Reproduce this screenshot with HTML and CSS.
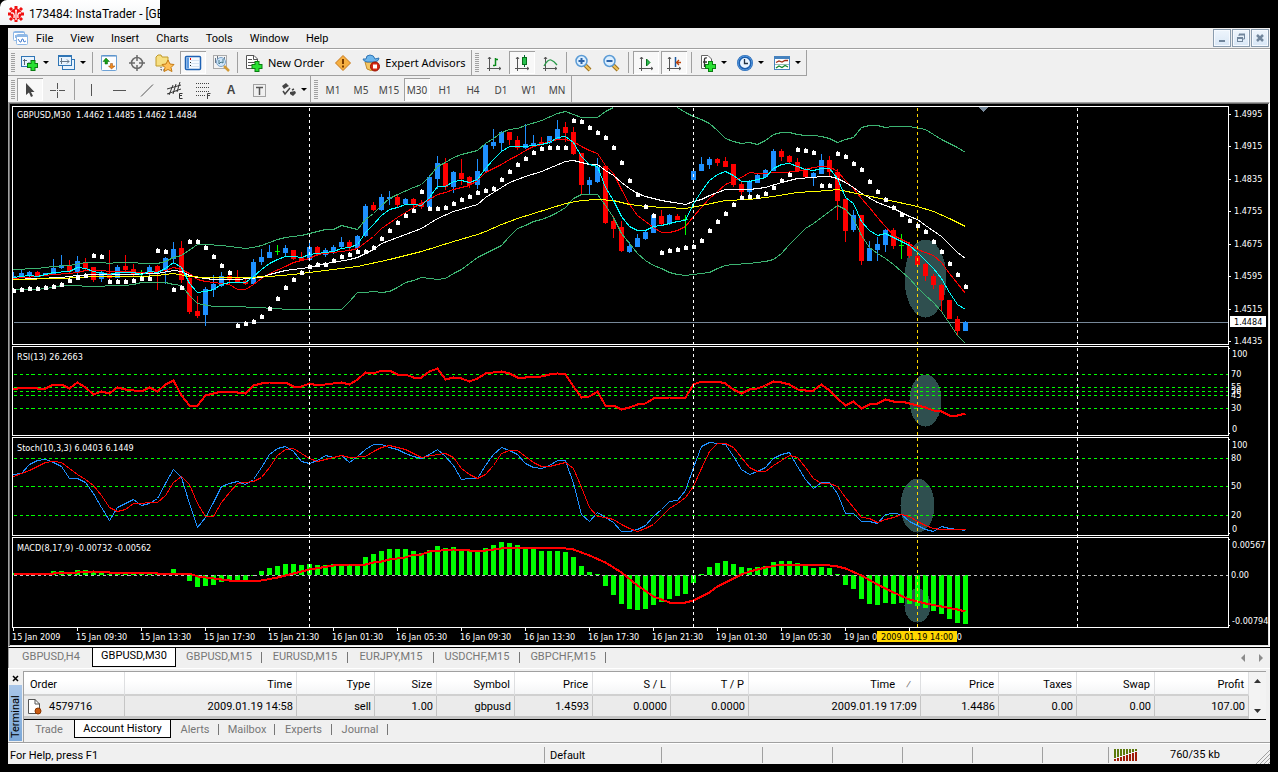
FILE: index.html
```html
<!DOCTYPE html>
<html lang="en">
<head>
<meta charset="utf-8">
<title>InstaTrader</title>
<link rel="stylesheet" href="styles.css">
</head>
<body>
<header class="titlebar">
  <svg class="logo" width="16" height="16" viewBox="0 0 16 16"><g stroke="#f01010" stroke-width="3"><path d="M8 0V3M8 13V16M0 8H3M13 8H16M2 2L4 4M14 2L12 4M2 14L4 12M14 14L12 12"/></g><circle cx="8" cy="8" r="5.6" fill="#f01010"/><g fill="none" stroke="#fff" stroke-width="1.3"><path d="M8 5V14M3 7Q7 6 6 12M13 7Q9 6 10 12"/></g><circle cx="8" cy="4.500" r="1" fill="#fff"/></svg>
  <span>173484: InstaTrader - [GBPUSD,M30]</span>
</header>
<main class="app">
  <div class="menubar">
    <svg width="16" height="16" viewBox="0 0 16 16"><g fill="#fff" stroke="#8fb8e6"><rect x=".5" y="1.500" width="11" height="9" rx="1"/><path d="M.5 2.500H11.500"/><path d="M2.500 5V8L4.500 6" fill="none"/><rect x="3.500" y="4.500" width="11" height="10" rx="1"/><path d="M3.500 6H14.500" stroke-width="2"/><path d="M5 9L7 12L8 12L9 9L10 9L11 12L13 11" fill="none" stroke="#4a80d0"/></g></svg>
    <nav class="menu">
      <button>File</button><button>View</button><button>Insert</button><button>Charts</button><button>Tools</button><button>Window</button><button>Help</button>
    </nav>
    <div class="winbtns">
      <button aria-label="Minimize"><svg width="10" height="10"><path d="M2 8H8" stroke="#71869c" stroke-width="2"/></svg></button>
      <button aria-label="Restore"><svg width="10" height="10" fill="none" stroke="#71869c"><path d="M3 3V1.500H8.500V6H7" /><path d="M3 1.500H9" stroke-width="2"/><rect x="1.500" y="5" width="5" height="3.500"/><path d="M1 5H7" stroke-width="2"/></svg></button>
      <button aria-label="Close"><svg width="10" height="10"><path d="M2 2L8 8M8 2L2 8" stroke="#71869c" stroke-width="2.500"/></svg></button>
    </div>
  </div>

  <div class="toolrow">
    <div class="toolbar lined">
      <i class="grip"></i>
      <button class="tool drop" aria-label="New chart"><svg width="18" height="18"><rect x=".5" y="2.500" width="13" height="10" fill="#e8f3fd" stroke="#2f75b5"/><path d="M0 2.500H14" stroke="#2f75b5"/><path d="M3.500 5V11M2 6.500H6M8 8V10" stroke="#567"/><path d="M12 6V17M6 11.500H17" stroke="#0a7d12" stroke-width="5"/><path d="M12 7V16M7 11.500H16" stroke="#29e033" stroke-width="3"/></svg></button>
      <button class="tool drop" aria-label="Profiles"><svg width="18" height="18"><g fill="#e8f3fd" stroke="#2f75b5"><rect x="4.500" y="5.500" width="12" height="10"/><rect x=".5" y="1.500" width="13" height="10"/></g><path d="M0 2H14" stroke="#2f75b5" stroke-width="2"/><path d="M3.500 4V10M2 7.500H11M9 5.500L11 7.500L9 9.500" fill="none" stroke="#678"/></svg></button>
      <i class="sep"></i>
      <button class="tool" aria-label="Market watch"><svg width="18" height="18"><rect x="1.500" y="1.500" width="15" height="15" rx="1" fill="#fdfdff" stroke="#6ea2d6"/><path d="M1 2H17" stroke="#4d88c4"/><path d="M6 4L9.500 7.500H7.500V10H5V7.500H3Z" fill="#16a016" stroke="#096009" stroke-width=".5"/><path d="M11.500 15L8.500 12H10.500V9.500H12.500V12H15Z" fill="#ef8b22" stroke="#9b4a06" stroke-width=".5"/></svg></button>
      <button class="tool" aria-label="Data window"><svg width="18" height="18" fill="none" stroke="#6a6a6a" stroke-width="1.500"><circle cx="9" cy="9" r="5.500"/><path d="M9 1V7M9 11V17M1 9H7M11 9H17"/></svg></button>
      <button class="tool" aria-label="Navigator"><svg width="20" height="18"><path d="M1 12V3L3 1H6L7 3H13V12Z" fill="#f7df82" stroke="#c09a2a"/><path d="M6 13V17M6 16H9" stroke="#555" stroke-dasharray="1 1"/><path d="M13 6L15 10L19 10.500L16 13.500L17 17.500L13 15.500L9 17.500L10 13.500L7 10.500L11 10Z" fill="#ffc058" stroke="#c47a12"/></svg></button>
      <button class="tool on" aria-label="Terminal"><svg width="18" height="18"><rect x="1.500" y="2.500" width="15" height="13" rx="1" fill="#f5faff" stroke="#1e62b4" stroke-width="1.500"/><path d="M2.500 3.500H5V14.500H2.500Z" fill="#5e9be0"/><path d="M7 6.500H15M7 9.500H15M7 12.500H15" stroke="#d5e3f2"/><path d="M6.500 5V13" stroke="#222" stroke-dasharray="1 2"/><path d="M6.500 4V6" stroke="#e00"/></svg></button>
      <button class="tool" aria-label="Strategy tester"><svg width="18" height="18"><rect x="1.500" y="1.500" width="13" height="13" fill="#f4f4f4" stroke="#aaa"/><path d="M3.500 4V9M5.500 2V5M12.500 3V6" stroke="#678"/><circle cx="9" cy="8" r="4.500" fill="#cfe6fa" stroke="#7ea4c8"/><path d="M7 6V10L9 8L11 9V5" fill="none" stroke="#478"/><path d="M12 12L17 17" stroke="#d29a35" stroke-width="2.500"/></svg></button>
      <i class="sep"></i>
      <button class="tool text"><svg width="18" height="18"><path d="M1.500 1.500H9L12.500 5V14.500H1.500Z" fill="#fff" stroke="#555"/><path d="M8.500 1V5.500H13M3 5.500H7M3 8.500H10M3 11.500H8" fill="none" stroke="#555"/><path d="M12 7V18M6.500 12.500H17.500" stroke="#0a7d12" stroke-width="5"/><path d="M12 8V17M7.500 12.500H16.500" stroke="#29e033" stroke-width="3"/></svg>New Order</button>
      <button class="tool" aria-label="Alert"><svg width="18" height="18"><path d="M9 1.500L16.500 9L9 16.500L1.500 9Z" fill="#f6b042" stroke="#c8781a"/><path d="M9 5V10M9 11.500V13.500" stroke="#7a3c00" stroke-width="2"/></svg></button>
      <button class="tool text"><svg width="18" height="18"><path d="M3 8L5 15Q9 18 13 15L14 8Z" fill="#f4c765" stroke="#c28b2c"/><path d="M1 5Q1 7 5 8H13Q17 7 17 4L13 5Q12 1 8 1T4 5Z" fill="#6cb6ec" stroke="#3075b5"/><circle cx="13" cy="12.500" r="4.500" fill="#d42a14" stroke="#971000"/><rect x="11" y="10.500" width="4" height="4" fill="#fff"/></svg>Expert Advisors</button>
    </div>
    <div class="toolbar lined">
      <i class="grip"></i>
      <button class="tool" aria-label="Bar chart"><svg width="18" height="18" fill="none" stroke="#555"><path d="M4.500 3V17M2 14.500H16M3 5L4.500 3L6 5M14 13L16 14.500L14 16"/><path d="M10.500 4V12M8 11.500H10M11 5.500H13" stroke="#0a8a1a" stroke-width="1.500"/></svg></button>
      <button class="tool on" aria-label="Candlesticks"><svg width="18" height="18" fill="none" stroke="#555"><path d="M4.500 3V17M2 14.500H16M3 5L4.500 3L6 5M14 13L16 14.500L14 16"/><path d="M11.500 1V13" stroke="#063"/><rect x="9.500" y="3.500" width="4" height="7" fill="#28c04e" stroke="#08701c"/></svg></button>
      <button class="tool" aria-label="Line chart"><svg width="18" height="18" fill="none" stroke="#555"><path d="M4.500 3V17M2 14.500H16M3 5L4.500 3L6 5M14 13L16 14.500L14 16"/><path d="M3 12Q7 5 10 6T16 11" stroke="#2a9a4a" stroke-width="1.300"/></svg></button>
      <i class="sep"></i>
      <button class="tool" aria-label="Zoom in"><svg width="18" height="18"><path d="M11 11L16 16" stroke="#9b6f1e" stroke-width="4"/><path d="M11 11L16 16" stroke="#f0c35a" stroke-width="2"/><circle cx="7.500" cy="7" r="5.500" fill="#dcefff" stroke="#5b9bd5" stroke-width="1.500"/><path d="M7.500 4V10M4.500 7H10.500" stroke="#2b63a8" stroke-width="2"/></svg></button>
      <button class="tool" aria-label="Zoom out"><svg width="18" height="18"><path d="M11 11L16 16" stroke="#9b6f1e" stroke-width="4"/><path d="M11 11L16 16" stroke="#f0c35a" stroke-width="2"/><circle cx="7.500" cy="7" r="5.500" fill="#dcefff" stroke="#5b9bd5" stroke-width="1.500"/><path d="M4.500 7H10.500" stroke="#2b63a8" stroke-width="2"/></svg></button>
      <i class="sep wide"></i>
      <button class="tool on" aria-label="Auto scroll"><svg width="18" height="18" fill="none" stroke="#555"><path d="M4.500 3V17M2 14.500H16M3 5L4.500 3L6 5M14 13L16 14.500L14 16"/><path d="M9.500 5L13 8.500L9.500 12Z" fill="#28c04e" stroke="#08701c"/></svg></button>
      <button class="tool on" aria-label="Chart shift"><svg width="18" height="18" fill="none" stroke="#555"><path d="M4.500 3V17M2 14.500H16M3 5L4.500 3L6 5M14 13L16 14.500L14 16"/><path d="M10.500 3V13" stroke="#1c5aa0" stroke-width="1.500"/><path d="M11 8.500H16M14 6L11.500 8.500L14 11" stroke="#b8420a" stroke-width="1.300"/></svg></button>
      <i class="sep wide"></i>
      <button class="tool drop" aria-label="Indicators"><svg width="18" height="18"><path d="M2.500 1.500H9L12.500 5V14.500H2.500Z" fill="#fff" stroke="#666"/><path d="M8 4Q5 3 5.500 7V13M4 8H8" fill="none" stroke="#333" stroke-width="1.300"/><path d="M11.500 7V18M6 12.500H17" stroke="#0a7d12" stroke-width="5"/><path d="M11.500 8V17M7 12.500H16" stroke="#29e033" stroke-width="3"/></svg></button>
      <button class="tool drop" aria-label="Periods"><svg width="18" height="18"><circle cx="9" cy="9" r="6.500" fill="#e8f4ff" stroke="#1d5fae" stroke-width="3"/><circle cx="9" cy="9" r="7" fill="none" stroke="#5ba0e6"/><path d="M8.500 5V9.500H12" fill="none" stroke="#234" stroke-width="1.300"/></svg></button>
      <button class="tool drop" aria-label="Templates"><svg width="18" height="18"><rect x="1.500" y="2.500" width="15" height="13" fill="#fff" stroke="#4682be"/><path d="M1 3.500H17" stroke="#4682be" stroke-width="3"/><path d="M3 8.500L6 7L9 8L12 6.500L15 6.500" fill="none" stroke="#a02a10" stroke-width="1.300"/><path d="M2 10.500H16" stroke="#9bb"/><path d="M3 14L6 12L9 13.500L12 11.500L15 13" fill="none" stroke="#12882a" stroke-width="1.300"/></svg></button>
    </div>
  </div>

  <div class="toolrow second">
    <div class="toolbar">
      <i class="grip"></i>
      <button class="tool on" aria-label="Cursor"><svg width="18" height="18"><path d="M5 2V14L8 11.500L10 16L12 15L10 11H13.500Z" fill="#444"/></svg></button>
      <button class="tool" aria-label="Crosshair"><svg width="18" height="18" stroke="#555"><path d="M8.500 2V8M8.500 11V17M1 9.500H7M10 9.500H16M8 9.500H9"/></svg></button>
      <i class="sep"></i>
      <button class="tool" aria-label="Vertical line"><svg width="18" height="18" stroke="#555"><path d="M9.500 3V15"/></svg></button>
      <button class="tool" aria-label="Horizontal line"><svg width="18" height="18" stroke="#555"><path d="M3 9.500H16"/></svg></button>
      <button class="tool" aria-label="Trendline"><svg width="18" height="18" stroke="#555"><path d="M3 15.500L15 3.500"/></svg></button>
      <button class="tool" aria-label="Equidistant channel"><svg width="18" height="18" fill="none" stroke="#333"><path d="M1 8L15 4M1 13L15 8M3 14L7 4M7 13L10 3M11 11L14 1"/><path d="M16.500 12.500H13.500V17.500H16.500M13.500 14.500H16"/></svg></button>
      <button class="tool" aria-label="Fibonacci"><svg width="18" height="18" fill="none" stroke="#444"><path d="M2 2.500H15M2 6.500H15M2 10.500H15M2 14.500H11" stroke-dasharray="1 1"/><path d="M16.500 12.500H13.500V18M13.500 14.500H16"/></svg></button>
      <button class="tool glyph">A</button>
      <button class="tool" aria-label="Text label"><svg width="18" height="18" fill="none" stroke="#555"><rect x="3.500" y="3.500" width="12" height="12" stroke-dasharray="1 1"/><path d="M6 6.500H13M9.500 6V14" stroke-width="1.500"/></svg></button>
      <button class="tool drop late" aria-label="Arrows"><svg width="16" height="18"><path d="M1 5L5 2L8 5L6 6L3 8Z M9 11L14 10L15 12L12 15L9 13Z" fill="#444"/><path d="M2 10L4 13L9 7M11 9L13 8" fill="none" stroke="#444" stroke-width="1.500"/></svg></button>
    </div>
    <div class="toolbar">
      <i class="grip"></i>
      <button class="tool tf">M1</button><button class="tool tf">M5</button><button class="tool tf">M15</button><button class="tool tf on">M30</button><button class="tool tf">H1</button><button class="tool tf">H4</button><button class="tool tf">D1</button><button class="tool tf">W1</button><button class="tool tf">MN</button>
    </div>
  </div>

  <section class="chart"><svg id="chart" width="100%" height="541"></svg></section>

  <nav class="charttabs">
    <button>GBPUSD,H4</button><button class="active">GBPUSD,M30</button><button>GBPUSD,M15</button><button>EURUSD,M15</button><button>EURJPY,M15</button><button>USDCHF,M15</button><button>GBPCHF,M15</button>
    <span class="scroll"><svg width="22" height="8" fill="#8c8c8c"><path d="M4 0V8L0 4Z M18 0V8L22 4Z"/></svg></span>
  </nav>

  <section class="terminal">
    <div class="side">
      <button aria-label="Close terminal"><svg width="7" height="7"><path d="M1 1L6 6M6 1L1 6" stroke="#000" stroke-width="1.500"/></svg></button>
      <span class="caption">Terminal</span>
    </div>
    <div class="body">
      <div class="tablewrap">
        <table>
          <colgroup><col class="w101"><col class="w172"><col class="w78"><col class="w62"><col class="w78"><col class="w78"><col class="w78"><col class="w78"><col class="w172"><col class="w78"><col class="w78"><col class="w78"><col class="w94"></colgroup>
          <thead><tr><th>Order</th><th>Time</th><th>Type</th><th>Size</th><th>Symbol</th><th>Price</th><th>S / L</th><th>T / P</th><th class="sorted">Time<span>⁄</span></th><th>Price</th><th>Taxes</th><th>Swap</th><th>Profit</th></tr></thead>
          <tbody><tr><td><svg width="16" height="16"><path d="M1.500 .5H8L12.500 5V14.500H1.500Z" fill="#fff" stroke="#555"/><path d="M8 0V5H13" fill="none" stroke="#555"/><circle cx="11" cy="12" r="3" fill="#c85a10" stroke="#8a3600"/></svg>4579716</td><td>2009.01.19 14:58</td><td>sell</td><td>1.00</td><td>gbpusd</td><td>1.4593</td><td>0.0000</td><td>0.0000</td><td>2009.01.19 17:09</td><td>1.4486</td><td>0.00</td><td>0.00</td><td>107.00</td></tr></tbody>
        </table>
        <div class="vscroll"><svg width="7" height="4"><path d="M0 4L3.500 0L7 4Z" fill="#333"/></svg><svg width="7" height="4"><path d="M0 0L3.500 4L7 0Z" fill="#333"/></svg></div>
      </div>
      <nav class="termtabs">
        <button>Trade</button><button class="active">Account History</button><button>Alerts</button><button>Mailbox</button><button>Experts</button><button>Journal</button>
      </nav>
    </div>
  </section>

  <footer class="status">
    <span class="help">For Help, press F1</span>
    <span class="c117">Default</span><span class="c101"></span><span class="c70"></span><span class="c70"></span><span class="c70"></span><span class="c70"></span><span class="c66"></span>
    <span class="net"><svg id="net" width="24" height="12" shape-rendering="crispEdges"></svg><b>760/35 kb</b></span>
    <svg class="sizer" width="14" height="14" stroke="#a0a0a0"><path d="M0 14L14 0M4 14L14 4M8 14L14 8M12 14L14 12"/></svg>
  </footer>
</main>
<script src="chart.js"></script>
</body>
</html>
```

FILE: styles.css
```css
* { box-sizing: border-box; }
body { margin: 0; background: #000; font: 11px/14px Roboto, "Noto Sans", sans-serif; color: #000; }
button { border: 0; padding: 0; background: none; font: inherit; color: inherit; }
svg { display: block; flex: none; }

.titlebar { display: flex; align-items: center; gap: 5px; width: 160px; height: 25px; padding: 2px 0 0 8px; overflow: hidden; white-space: nowrap; font-size: 12px; background: linear-gradient(#fff, #f0f3f5); border-top-left-radius: 7px; }
.app { margin: 3px 8px 8px; background: #f0f0f0; }

.menubar { display: flex; align-items: center; height: 22px; padding: 0 1px 1px 5px; border-bottom: 1px solid #fff; box-shadow: inset 0 -1px #a0a0a0; }
.menu { display: flex; flex: 1; gap: 17px; padding: 1px 0 0 7px; }
.winbtns { display: flex; gap: 1px; }
.winbtns button { display: grid; place-items: center; width: 18px; height: 18px; border: 1px solid #8a9cae; background: linear-gradient(#eef5fc, #d9e7f6); box-shadow: inset 0 0 0 1px #f6faff; }

.toolrow { display: flex; height: 26px; }
.toolbar { display: flex; align-items: center; padding-left: 3px; border-right: 1px solid #a0a0a0; }
.toolbar.lined { border-bottom: 1px solid #a0a0a0; }
.second .toolbar { padding-top: 1px; }
.grip { width: 4px; height: 19px; margin-right: 1px; background: repeating-linear-gradient(#a0a0a0 0 1px, #f0f0f0 1px 2px); }
.tool { display: flex; align-items: center; justify-content: center; width: 26px; height: 23px; margin: 0 1px; }
.tool.on { background: #f8f8f8; box-shadow: inset 1px 1px #a0a0a0, inset -1px -1px #fff; }
.tool.drop { width: 35px; gap: 4px; }
.tool.drop::after { content: ""; border: 3px solid transparent; border-top-color: #000; border-bottom: 0; }
.tool.late { padding-left: 4px; }
.tool.text { width: auto; gap: 5px; padding: 0 4px; font: 11px/14px "Noto Sans", sans-serif; white-space: nowrap; }
.tool.glyph { color: #444; font: bold 12px/14px "Liberation Sans", sans-serif; }
.tool.tf { color: #444; font: 10px/14px "Noto Sans", sans-serif; }
.sep { width: 1px; height: 21px; margin: 0 2px; background: #a0a0a0; }
.sep.wide { margin: 0 3px; }

.chart { background: #000; border: 1px solid; border-color: #a0a0a0 #fff #fff #a0a0a0; box-shadow: inset 1px 1px #696969, inset -1px -1px #e3e3e3; padding: 1px; overflow: hidden; }
.chart svg { display: block; overflow: hidden; }
.chart text { font: 9px/12px "DejaVu Sans Condensed", "DejaVu Sans", sans-serif; fill: #fff; }
.chart text.dark { fill: #000; }

.charttabs, .termtabs { display: flex; align-items: center; color: #777; border-top: 1px solid #000; }
.charttabs { height: 21px; padding-left: 1px; border-left: 1px solid #a0a0a0; }
.charttabs button { position: relative; width: 86px; height: 19px; padding-bottom: 2px; align-self: flex-start; }
.charttabs button:first-child { width: 82px; }
.charttabs .active { width: 84px; background: #fff; color: #000; border: 1px solid #000; border-top: 0; }
.charttabs button:nth-child(n+3)::after, .termtabs button:nth-child(n+3)::after { content: ""; position: absolute; right: 0; top: 4px; height: 11px; border-right: 1px solid #777; }
.charttabs .scroll { margin-left: auto; padding-right: 7px; }

.terminal { display: flex; border-top: 1px solid #fff; padding-top: 2px; background: #f0f0f0; }
.side { display: flex; flex-direction: column; align-items: center; width: 15px; padding-top: 1px; }
.side button { height: 13px; }
.caption { display: flex; align-items: center; writing-mode: vertical-rl; transform: rotate(180deg); width: 13px; height: 56px; padding-top: 3px; font: 11px/13px Roboto, sans-serif; background: linear-gradient(#7ba8d8, #a9c6e8); }
.body { flex: 1; min-width: 0; border-left: 1px solid #a0a0a0; margin-right: 4px; }
.tablewrap { display: flex; border-top: 1px solid #a0a0a0; background: #f0f0f0; }
table { flex: 1; min-width: 0; width: 100%; table-layout: fixed; border-collapse: separate; border-spacing: 0; }
.w101 { width: 101px; } .w172 { width: 172px; } .w78 { width: 78px; } .w62 { width: 62px; } .w94 { width: 94px; }
th, td { text-align: right; font-weight: 400; white-space: nowrap; }
th { height: 24px; padding: 3px 4px 0; background: linear-gradient(#fff 40%, #f4f5f6); border-right: 1px solid #dedfe1; border-bottom: 2px solid #d0d0d0; }
td { height: 23px; padding: 1px 3px 0; background: #ebebeb; border-right: 1px solid #c5c5c5; border-bottom: 3px solid #c5c5c5; }
th:first-child { text-align: left; padding-left: 6px; }
td:first-child { display: flex; align-items: center; gap: 6px; padding-left: 3px; }
.sorted span { padding: 0 5px 0 11px; color: #777; }
.vscroll { display: flex; flex-direction: column; justify-content: space-between; align-items: center; width: 17px; padding: 7px 0 6px; background: #f3f3f3; }
.termtabs { height: 23px; padding-bottom: 3px; }
.termtabs button { position: relative; width: 61px; height: 19px; }
.termtabs button:first-child { width: 50px; }
.termtabs .active { width: 97px; height: 18px; align-self: flex-start; background: #fff; color: #000; border: 1px solid #000; border-top: 0; }
.termtabs button:nth-child(3) { width: 48px; }
.termtabs button:nth-child(4), .termtabs button:nth-child(6) { width: 56px; }
.termtabs button:nth-child(5) { width: 57px; }

.status { position: relative; display: flex; align-items: center; height: 22px; padding-top: 2px; border-top: 1px solid #a0a0a0; box-shadow: inset 0 1px #fff; }
.status > span { height: 16px; line-height: 18px; border-left: 1px solid #a0a0a0; padding-left: 5px; }
.status .help { flex: 1; border: 0; padding-left: 2px; }
.c117 { width: 117px; } .c101 { width: 101px; } .c70 { width: 70px; } .c66 { width: 66px; }
.status .net { display: flex; align-items: center; gap: 32px; width: 162px; }
.net b { font-weight: 400; }
.sizer { position: absolute; right: 0; bottom: 0; }
```

FILE: chart.js
```js
// Bars are 8px apart; all y values below are window pixels.
const NS = "http://www.w3.org/2000/svg";
const el = (parent, name, attrs, text) => {
  const n = document.createElementNS(NS, name);
  for (const k in attrs) n.setAttribute(k, attrs[k]);
  if (text) n.textContent = text;
  parent.appendChild(n);
  return n;
};
const X = i => 13 + 8 * i;
const root = document.getElementById("chart");
const plot = el(root, "g", { transform: "translate(-10 -104)", "shape-rendering": "crispEdges" });
const lines = el(plot, "g", { transform: "translate(.5 .5)", fill: "none" });
const WHITE = "#fff", RED = "#f00", BLUE = "#1e90ff", LIME = "#0f0";

const hline = (y, color, dash) => el(lines, "line", { x1: 13, x2: "100%", y1: y, y2: y, stroke: color, "stroke-dasharray": dash || "none" });

// highlighted zones
[[925, 278, 21, 39], [925, 400, 16, 26], [917, 505, 17, 27], [917, 605, 13, 17]].forEach(([cx, cy, rx, ry]) =>
  el(lines, "ellipse", { cx, cy, rx, ry, fill: "#2f4f4f" }));

hline(322, "#778899");
[374, 387, 391, 395, 408, 458, 486, 515].forEach(y => hline(y, LIME, "3 3"));

// candles: high, low, body top, body bottom, r(ed) / b(lue) / g(reen doji)
const candles = `272 280 276 280 b|269 276 273 276 b|271 280 272 276 b|271 277 272 276 r|273 276 273 276 b|259 274 268 274 b|255 269 265 268 b|260 274 266 272 r|256 275 261 272 b|258 270 262 269 r|267 282 267 280 r|271 282 272 279 b|250 279 273 278 r|265 278 267 278 b|255 271 266 270 r|264 277 269 274 r|270 276 273 274 g|265 275 267 274 b|265 290 266 272 r|257 284 258 271 b|242 264 249 259 b|241 283 248 280 r|276 314 278 312 r|296 318 311 316 r|287 326 289 315 b|275 297 284 290 b|272 287 276 286 b|272 285 276 279 r|270 283 277 282 r|279 285 281 284 r|259 284 262 284 b|249 265 257 262 b|245 258 252 258 b|245 255 251 252 g|245 257 248 253 b|250 260 250 259 r|252 261 257 260 r|243 261 247 260 b|246 256 247 254 r|248 257 250 255 b|245 254 247 251 b|237 248 242 247 b|240 251 242 247 r|235 249 236 248 b|204 237 206 236 b|202 211 205 210 r|194 211 197 210 b|191 205 197 199 b|194 207 197 205 r|198 205 199 204 b|198 207 199 205 r|200 209 203 207 r|175 208 177 207 b|156 189 163 179 b|158 190 163 187 r|171 193 172 187 b|159 185 173 179 r|176 188 177 185 r|159 189 171 185 b|143 172 145 171 b|129 149 142 146 b|131 151 132 143 b|132 145 132 140 r|136 150 140 148 r|124 149 144 148 b|135 147 143 146 b|137 144 142 144 r|136 144 136 143 b|120 139 129 139 b|122 142 127 133 r|127 155 132 154 r|153 195 153 185 r|177 194 180 185 b|158 183 167 182 b|165 224 166 223 r|216 238 221 229 r|221 252 227 251 r|242 253 246 252 b|234 247 238 247 b|231 240 232 239 b|214 233 215 233 b|210 225 216 224 r|214 225 215 224 b|214 220 216 220 r|215 235 219 220 g|170 180 171 180 b|157 171 164 171 b|157 169 159 165 b|158 166 159 163 r|157 167 161 167 r|164 187 164 185 r|181 197 184 192 r|180 197 182 192 b|174 183 175 183 b|169 177 170 177 b|149 171 151 171 b|149 161 151 157 r|155 163 156 162 r|158 172 162 171 r|168 177 169 177 r|172 186 173 177 b|154 174 160 174 b|156 176 160 172 r|169 220 172 201 r|199 242 199 231 r|210 232 215 230 b|215 265 215 261 r|241 261 248 261 b|237 261 244 250 b|229 252 230 245 b|228 249 230 246 r|234 259 245 246 g|242 258 244 256 r|255 266 256 265 r|263 281 264 276 r|274 289 276 285 r|284 311 285 300 r|300 319 300 319 r|316 335 319 331 r|321 331 322 331 b`.split("|");
const tint = { r: RED, b: BLUE, g: LIME };
candles.forEach((row, i) => {
  const [hi, lo, top, bot, c] = row.split(" ");
  el(plot, "rect", { x: X(i), y: hi, width: 1, height: lo - hi, fill: tint[c] });
  const left = i ? X(i) - 2 : X(i);
  el(plot, "rect", { x: left, y: top, width: X(i) + 3 - left, height: bot - top, fill: tint[c] });
});

// histogram
const hist = [573,573,573,573,573,571,571,573,570,570,571,573,574,572,573,574,573,574,573,573,569,573,581,587,586,585,582,580,580,580,576,571,568,566,564,564,565,564,565,565,564,565,565,564,557,554,551,549,549,549,551,553,550,546,548,547,549,551,552,548,545,542,543,545,547,549,551,551,551,552,557,566,572,574,586,595,604,609,610,609,605,602,599,596,594,583,574,567,563,561,564,567,568,567,566,562,561,561,563,565,568,567,568,574,585,589,599,604,605,603,604,603,604,606,608,611,614,619,623,624];
hist.forEach((y, i) => el(plot, "rect", { x: i ? X(i) - 2 : 13, y: Math.min(y, 575), width: i ? 5 : 3, height: Math.abs(575 - y), fill: LIME }));

const overlay = el(plot, "g", { transform: "translate(.5 .5)", fill: "none" });
const series = (data, stroke, width = 1) => {
  const points = data.trim().split(/\s+/).map(p => { const [i, y] = p.split(":"); return X(+i) + "," + y; }).join(" ");
  el(overlay, "polyline", { points, stroke, "stroke-width": width });
};
el(overlay, "line", { x1: 13, x2: "100%", y1: 575, y2: 575, stroke: "#c0c0c0", "stroke-dasharray": "3 3" });

// Bollinger bands
series("0:269 3:268 5:266 7:265 9:262 11:262 12:263 13:262 15:262 16:263 18:263 19:261 20:257 21:255 23:244 24:244 26:245 29:248 30:247 31:245 33:239 34:237 36:235 38:231 39:229 40:229 41:225 42:227 43:229 44:219 45:213 46:205 47:198 48:194 50:187 51:184 52:176 53:166 54:162 55:157 56:154 58:150 59:143 60:138 61:132 62:129 63:128 64:125 66:120 68:113 69:111 70:114 71:117 73:117 74:111 75:107", "#3cb371");
series("83:107 84:112 85:116 86:119 87:123 88:130 89:138 90:141 91:143 92:142 93:144 94:140 95:134 96:132 97:132 98:134 99:135 100:135 101:136 102:138 103:142 104:139 105:137 106:127 107:125 108:125 109:127 110:126 112:126 114:129 115:134 116:139 117:143 118:147 119:152", "#3cb371");
series("0:289 3:289 5:287 6:285 8:285 9:286 11:286 12:285 14:285 15:284 16:282 19:282 20:284 21:285 22:295 23:303 25:306 28:306 30:307 33:308 34:309 41:309 42:301 43:292 44:292 45:291 46:292 47:291 48:287 49:282 50:280 51:277 53:279 54:278 55:273 56:269 57:263 58:257 59:253 61:245 62:236 63:228 64:225 65:221 66:219 67:216 68:212 69:207 70:198 71:194 73:194 74:205 75:217 76:233 77:243 78:253 79:260 80:265 81:268 82:272 83:274 84:275 86:273 87:272 88:268 89:265 90:264 92:263 94:261 95:259 96:253 97:244 98:236 99:228 100:223 101:217 102:211 103:205 104:209 105:218 106:235 107:247 108:253 109:258 110:264 111:271 112:278 113:287 114:295 115:302 116:311 117:323 118:335 119:343", "#3cb371");
// moving averages
series("0:278 3:276 5:274 7:273 8:272 9:270 10:270 13:271 17:272 19:270 20:267 21:269 22:273 23:279 24:281 25:282 27:284 28:289 29:289 30:284 31:278 32:273 34:266 35:262 37:258 38:254 39:253 41:251 42:250 43:248 44:242 45:236 46:228 48:217 50:207 51:203 52:199 53:194 54:192 55:189 57:185 58:180 59:172 60:168 61:164 62:159 63:155 64:150 65:146 66:144 67:141 68:139 69:139 70:141 71:146 72:150 73:153 74:165 75:173 76:189 77:204 78:215 79:221 80:227 81:232 82:232 83:230 84:226 85:216 86:207 87:198 88:191 89:184 91:177 92:172 93:173 96:172 98:171 100:167 101:166 102:166 103:171 104:180 105:188 106:198 107:207 108:217 109:226 110:235 111:239 112:243 113:249 114:252 115:255 116:262 117:273 118:283 119:293", RED);
series("0:279 3:278 6:277 8:275 10:274 14:274 18:273 20:270 21:271 22:275 23:277 25:279 28:279 31:277 32:274 34:270 37:267 39:263 40:262 42:259 43:257 45:249 46:243 48:237 51:228 53:218 55:211 58:204 59:197 60:192 61:187 62:182 64:176 66:171 69:161 70:160 72:164 73:164 74:170 75:175 76:182 77:188 78:193 79:196 81:200 84:204 85:201 86:199 87:195 88:192 89:189 92:189 94:187 96:182 98:178 100:177 101:176 102:176 103:178 104:182 105:187 106:193 108:202 110:208 112:216 113:219 114:225 116:236 117:244 118:252 119:258", WHITE);
series("0:279 6:278 10:276 16:276 18:275 20:273 22:276 24:277 29:277 32:276 35:274 37:272 39:270 43:266 47:259 51:251 55:241 58:234 59:231 61:224 63:218 65:213 67:208 69:203 71:200 73:199 75:200 77:204 79:206 84:208 86:205 89:200 92:199 95:196 98:192 102:190 103:189 106:194 109:199 113:206 115:211 117:218 119:226", "#ff0");
series("0:277 2:275 3:276 5:272 7:271 8:267 9:268 10:271 12:274 13:272 15:272 16:274 17:271 18:272 19:268 20:262 21:267 22:283 23:292 24:291 25:289 26:284 27:282 29:282 30:276 31:269 32:263 33:259 34:256 35:256 36:257 37:254 38:253 39:252 40:251 41:248 42:247 43:244 44:232 45:224 46:215 47:209 48:207 49:204 50:204 51:205 52:197 53:186 54:186 55:181 56:180 57:182 58:179 59:168 60:159 61:151 62:146 64:146 66:144 67:142 68:137 69:136 70:142 71:156 72:164 73:166 74:187 75:200 76:216 77:226 78:230 79:230 80:226 81:225 82:223 83:221 84:220 85:203 86:191 87:180 88:174 89:171 90:175 91:181 92:181 93:179 94:177 95:168 96:164 97:163 98:166 99:169 100:170 101:168 102:168 103:178 104:197 105:203 106:221 107:230 108:235 109:233 110:237 111:241 112:245 113:252 114:260 115:268 116:278 117:292 118:304 119:309", "#0ff");
// RSI
series("0:389 1:387 2:387 3:388 4:388 5:384 6:384 7:388 8:382 9:387 10:394 11:391 12:393 13:387 14:389 15:390 16:391 17:387 18:391 19:384 20:380 21:395 22:405 23:405 24:395 25:393 26:391 27:391 28:392 29:393 30:385 31:383 32:382 34:382 35:386 36:386 37:383 38:385 39:384 40:383 41:382 42:384 43:379 44:372 45:373 46:370 47:370 48:374 49:374 50:377 51:377 52:371 53:368 54:379 55:377 56:378 57:381 58:378 59:373 60:372 61:371 62:373 63:377 64:377 66:376 67:374 68:373 69:374 70:386 71:397 72:396 73:391 74:405 75:405 76:409 77:407 78:404 79:403 80:398 82:397 84:397 85:384 86:381 88:381 89:383 90:389 91:393 92:389 93:388 94:385 95:381 96:382 97:384 98:389 99:390 100:390 101:384 102:390 103:398 104:405 105:401 106:408 107:404 108:403 109:399 110:401 111:401 112:403 113:405 114:407 115:410 116:411 117:415 118:415 119:413", RED, 2);
// stochastic
series("0:474 1:473 2:464 3:460 4:459 5:462 6:466 7:478 8:478 9:482 10:493 11:507 12:520 13:507 14:503 15:499 16:505 17:503 18:498 19:483 20:469 21:477 22:503 23:527 24:517 25:502 26:486 27:483 28:481 29:484 30:479 31:467 32:454 33:448 34:446 35:451 36:461 37:463 38:460 39:455 40:457 41:455 42:462 43:456 44:449 45:444 46:444 47:447 48:449 49:453 50:456 51:458 52:454 53:449 54:456 55:465 56:479 57:478 58:478 59:465 60:454 61:447 62:450 63:454 64:463 65:467 66:468 67:465 68:460 69:460 70:483 71:514 72:521 73:512 74:517 75:522 76:531 77:531 78:529 79:525 80:516 81:509 82:501 83:500 84:490 85:467 86:446 87:442 88:443 89:444 90:456 91:469 92:474 93:471 94:467 95:458 96:454 97:452 98:466 99:479 100:488 101:482 102:482 103:493 104:513 105:513 106:521 107:521 108:523 109:514 110:513 111:514 112:521 113:525 114:529 115:531 116:526 117:528 118:529 119:530", BLUE);
series("0:476 1:473 2:470 3:466 4:462 5:461 6:462 7:468 8:474 9:479 10:485 11:495 12:507 13:511 14:509 15:503 18:502 19:495 20:482 21:476 22:484 23:503 24:516 25:516 26:502 27:492 28:483 30:481 31:477 32:467 33:455 34:449 35:448 36:453 37:458 38:461 39:459 41:455 42:457 44:456 45:451 46:447 47:445 48:447 49:449 50:453 51:457 53:454 54:453 55:457 56:468 57:474 58:478 59:474 60:465 61:453 62:450 63:450 64:456 65:462 66:466 67:466 69:462 70:468 71:487 72:507 73:516 74:517 75:519 76:524 77:528 78:531 79:528 80:524 81:516 82:508 83:503 84:497 85:486 86:468 87:451 88:443 89:443 90:447 91:457 92:467 93:471 94:471 95:465 96:460 97:455 98:457 99:467 100:478 101:483 102:483 103:486 104:497 105:507 106:517 107:518 108:522 109:519 110:517 111:514 112:516 113:521 114:525 115:528 116:529 119:529", RED);
// MACD signal
series("0:573 5:573 8:572 10:571 12:572 15:572 18:573 22:573 23:576 24:577 26:579 28:581 31:580 33:577 35:573 37:569 40:565 42:564 44:564 45:562 46:561 47:559 49:557 50:554 51:554 52:551 55:549 57:550 59:550 61:548 63:547 68:547 70:549 72:555 74:562 76:572 78:585 80:596 82:602 84:602 85:600 86:596 87:592 88:586 89:582 90:578 91:574 92:571 94:567 96:564 98:564 102:565 103:566 104:568 106:575 108:584 110:592 112:599 114:603 116:606 118:609 119:611", RED, 2);

// parabolic SAR
[291,290,289,289,288,287,285,281,278,276,256,257,282,282,282,281,279,279,251,252,290,288,242,242,248,257,266,273,326,324,322,317,309,299,288,280,273,267,265,265,261,257,255,252,252,248,239,231,223,216,211,192,209,209,208,204,200,197,193,191,189,180,172,165,159,153,149,148,148,148,121,122,128,133,138,148,163,181,195,207,216,253,251,250,248,247,241,231,222,214,205,198,197,197,194,188,181,175,150,151,153,186,186,154,157,164,170,182,192,200,208,215,221,226,232,242,252,264,275,287].forEach((y, i) =>
  el(plot, "path", { d: `M${X(i) - 1} ${y - 2}h1v-1h1v1h2v4h-4z`, fill: WHITE }));

[309, 693, 1077].forEach(x => el(overlay, "line", { x1: x, x2: x, y1: 107, y2: 626, stroke: WHITE, "stroke-dasharray": "3 3" }));
el(overlay, "line", { x1: 917, x2: 917, y1: 107, y2: 626, stroke: "#ffd700", "stroke-dasharray": "3 3" });
el(plot, "path", { d: "M979 107H988L984 112H983Z", fill: "#778899" });

// pane frames
const panes = [[106, 344], [346, 435], [437, 535], [537, 627]];
panes.forEach(([a, b]) => {
  el(plot, "rect", { x: 12, y: a, width: "100%", height: 1, fill: WHITE });
  el(plot, "rect", { x: 12, y: b, width: "100%", height: 1, fill: WHITE });
  el(plot, "rect", { x: 12, y: a, width: 1, height: b - a, fill: WHITE });
});
[["GBPUSD,M30\u00a0 1.4462 1.4485 1.4462 1.4484", 118], ["RSI(13) 26.2663", 360], ["Stoch(10,3,3) 6.0403 6.1449", 451], ["MACD(8,17,9) -0.00732 -0.00562", 551]].forEach(([t, y]) =>
  el(plot, "text", { x: 17, y }, t));

// time axis
["15 Jan 2009", "15 Jan 09:30", "15 Jan 13:30", "15 Jan 17:30", "15 Jan 21:30", "16 Jan 01:30", "16 Jan 05:30", "16 Jan 09:30", "16 Jan 13:30", "16 Jan 17:30", "16 Jan 21:30", "19 Jan 01:30", "19 Jan 05:30", "19 Jan 0", "0"].forEach((t, k) => {
  el(plot, "rect", { x: 13 + 64 * k, y: 628, width: 1, height: 3, fill: WHITE });
  if (k < 14) el(plot, "text", { x: 12 + 64 * k, y: 640 }, t);
  else el(plot, "text", { x: 962, y: 640, "text-anchor": "end" }, t);
});
el(plot, "rect", { x: 877, y: 631, width: 80, height: 11, fill: "#ffd700" });
el(plot, "text", { x: 881, y: 640, class: "dark" }, "2009.01.19 14:00");

// price axis, anchored to the right edge
const axis = el(el(root, "svg", { x: "100%", style: "overflow:visible" }), "g", { transform: "translate(0 -104)", "shape-rendering": "crispEdges" });
el(axis, "rect", { x: -39, y: 104, width: 39, height: 541, fill: "#000" });
panes.forEach(([a, b]) => el(axis, "rect", { x: -40, y: a, width: 1, height: b - a + 1, fill: WHITE }));
[["1.4995", 114], ["1.4915", 146], ["1.4835", 179], ["1.4755", 211], ["1.4675", 244], ["1.4595", 276], ["1.4515", 309], ["1.4435", 341]].forEach(([t, y]) => {
  el(axis, "rect", { x: -39, y, width: 2, height: 1, fill: WHITE });
  el(axis, "text", { x: -34, y: y + 3 }, t);
});
el(axis, "rect", { x: -38, y: 316, width: 36, height: 11, fill: WHITE });
el(axis, "text", { x: -34, y: 325, class: "dark" }, "1.4484");
[["100", 354], ["70", 374], ["55", 387], ["50", 391], ["45", 395], ["30", 408], ["0", 429], ["100", 445], ["80", 458], ["50", 486], ["20", 515], ["0", 529], ["0.00567", 545], ["0.00", 575], ["-0.00794", 621]].forEach(([t, y]) =>
  el(axis, "text", { x: t.length === 2 || t === "0.00" ? -37 : -36, y: y + 3 }, t));
[348, 433, 439, 533, 539, 625].forEach(y => el(axis, "rect", { x: -39, y, width: 1, height: 1, fill: WHITE }));

// connection meter
const net = document.getElementById("net");
for (let k = 0; k < 8; k++) {
  const red = 2 + k;
  el(net, "rect", { x: k * 3, y: 0, width: 2, height: 11 - red, fill: "#5c7a0c" });
  el(net, "rect", { x: k * 3, y: 12 - red, width: 2, height: red, fill: "#a01c08" });
}
```
